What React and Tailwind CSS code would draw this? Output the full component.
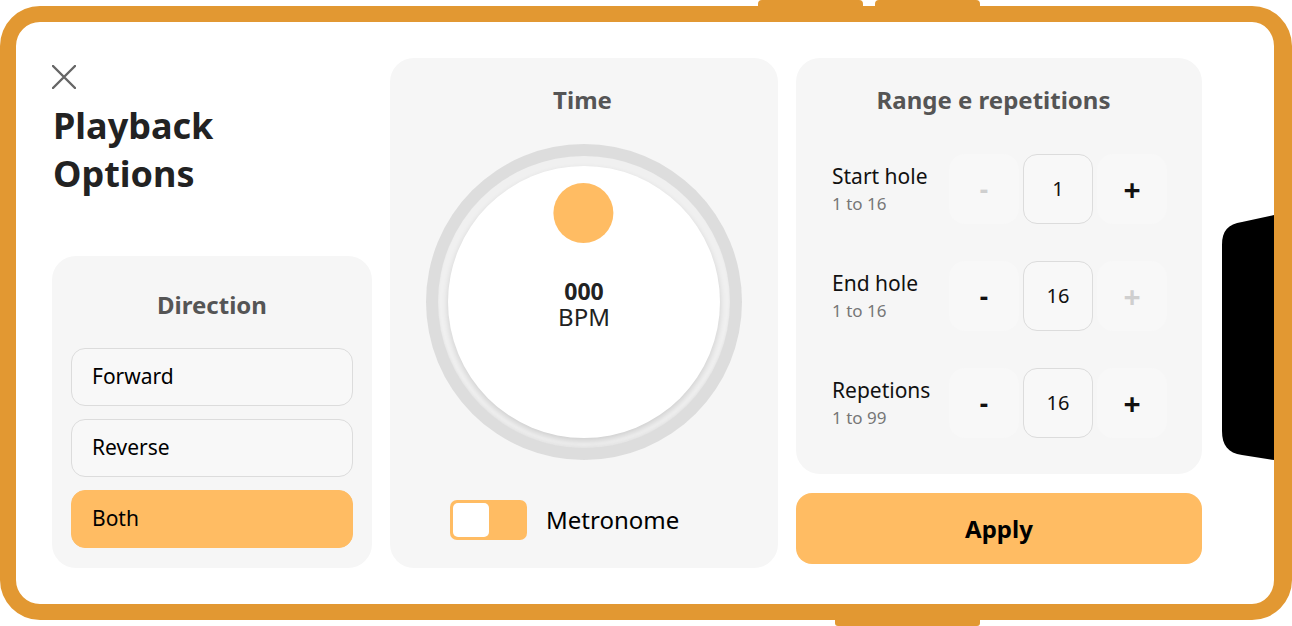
import { useState } from "react";

const font = { fontFamily: '"Noto Sans", "Open Sans", sans-serif' };

function CloseIcon() {
  return (
    <svg width="24" height="24" viewBox="0 0 24 24" className="block">
      <path d="M1 1L23 23M23 1L1 23" stroke="#666666" strokeWidth="2.4" strokeLinecap="round" />
    </svg>
  );
}

function Stepper({ label, range, value, minusOff, plusOff }) {
  return (
    <div className="flex items-center h-[70px]">
      <div className="flex-1">
        <div className="text-[21px] leading-[26px] text-[#111]">{label}</div>
        <div className="text-[17px] leading-[22px] mt-[4px] text-[#777]">{range}</div>
      </div>
      <div className="flex gap-[4px]">
        <button
          className={
            "w-[70px] h-[70px] rounded-[16px] bg-[#f8f8f8] text-[26px] font-bold " +
            (minusOff ? "text-[#cfcfcf]" : "text-[#111]")
          }
        >
          -
        </button>
        <div className="w-[70px] h-[70px] rounded-[14px] border-[1.5px] border-[#dcdcdc] bg-[#f8f8f8] flex items-center justify-center text-[20px] text-[#111]">
          {value}
        </div>
        <button
          className={
            "w-[70px] h-[70px] rounded-[16px] bg-[#f8f8f8] text-[30px] font-bold " +
            (plusOff ? "text-[#cfcfcf]" : "text-[#111]")
          }
        >
          +
        </button>
      </div>
    </div>
  );
}

export default function App() {
  const [direction, setDirection] = useState("Both");
  const [metronome, setMetronome] = useState(true);

  return (
    <div className="relative w-[1292px] h-[626px] bg-white overflow-hidden" style={font}>
      {/* top buttons of the device */}
      <div className="flex h-[6px]">
        <div className="ml-[758px] w-[105px] h-[8px] rounded-t-[4px] bg-[#E29832]" />
        <div className="ml-[12px] w-[105px] h-[8px] rounded-t-[4px] bg-[#E29832]" />
      </div>

      <div className="w-[1292px] h-[614px] border-[16px] border-r-[18px] border-[#E29832] rounded-[40px] bg-white">
        <div className="flex gap-[18px] p-[36px] h-full">
          {/* left column */}
          <div className="w-[320px] flex flex-col">
            <button className="mt-[7px] w-[24px] h-[24px]">
              <CloseIcon />
            </button>
            <h1 className="mt-[13px] ml-[1px] text-[36px] leading-[48px] font-bold text-[#222]">
              Playback
              <br />
              Options
            </h1>
            <div className="mt-auto h-[312px] rounded-[24px] bg-[#f6f6f6] px-[19px] pt-[33px]">
              <div className="text-center text-[24px] leading-[32px] font-bold text-[#555]">Direction</div>
              <div className="mt-[27px] flex flex-col gap-[13px]">
                {["Forward", "Reverse", "Both"].map((d) => (
                  <button
                    key={d}
                    onClick={() => setDirection(d)}
                    className={
                      "h-[58px] rounded-[14px] pl-[20px] text-left text-[21px] text-black " +
                      (direction === d
                        ? "bg-[#FFBC63] border-[1.5px] border-[#FFBC63]"
                        : "bg-[#f8f8f8] border-[1.5px] border-[#dcdcdc]")
                    }
                  >
                    {d}
                  </button>
                ))}
              </div>
            </div>
          </div>

          {/* time column */}
          <div className="w-[388px] rounded-[24px] bg-[#f6f6f6] pt-[26px] flex flex-col items-center">
            <div className="text-[24px] leading-[32px] font-bold text-[#555] -ml-[3px]">Time</div>
            <div className="mt-[28px] w-[316px] h-[316px] rounded-full bg-[#dddddd] p-[12px]">
              <div className="w-full h-full rounded-full bg-[#f0f0f0] p-[10px] shadow-[inset_0_-2px_3px_rgba(0,0,0,0.05)]">
                <div className="relative w-full h-full rounded-full bg-white shadow-[0_3px_6px_rgba(0,0,0,0.14)] flex flex-col items-center justify-center pt-[4px]">
                  <div className="absolute top-[17px] left-1/2 -translate-x-[51%] w-[60px] h-[60px] rounded-full bg-[#FFBC63]" />
                  <div className="text-[23px] leading-[26px] font-bold text-[#222]">000</div>
                  <div className="text-[24px] leading-[26px] text-[#222]">BPM</div>
                </div>
              </div>
            </div>
            <div className="mt-[40px] self-start ml-[60px] flex items-center gap-[19px]">
              <button
                onClick={() => setMetronome(!metronome)}
                className={
                  "w-[77px] h-[40px] rounded-[7px] p-[3px] flex " +
                  (metronome ? "bg-[#FFBC63] justify-start" : "bg-[#dddddd] justify-end")
                }
              >
                <span className="w-[36px] h-[34px] rounded-[5px] bg-white" />
              </button>
              <span className="text-[24px] text-black">Metronome</span>
            </div>
          </div>

          {/* range column */}
          <div className="w-[406px] flex flex-col">
            <div className="h-[416px] rounded-[24px] bg-[#f6f6f6] pt-[26px] pl-[36px] pr-[35px]">
              <div className="text-center text-[24px] leading-[32px] font-bold text-[#555] -ml-[6px] mr-[6px]">
                Range e repetitions
              </div>
              <div className="mt-[38px] flex flex-col gap-[37px]">
                <Stepper label="Start hole" range="1 to 16" value="1" minusOff />
                <Stepper label="End hole" range="1 to 16" value="16" plusOff />
                <Stepper label="Repetions" range="1 to 99" value="16" />
              </div>
            </div>
            <button className="mt-[19px] h-[71px] rounded-[16px] bg-[#FFBC63] text-[24px] font-bold text-black">
              Apply
            </button>
          </div>
        </div>
      </div>

      {/* bottom button of the device */}
      <div className="flex">
        <div className="ml-[835px] -mt-[1px] w-[145px] h-[7px] rounded-b-[3px] bg-[#E29832]" />
      </div>

      {/* camera notch on the right edge */}
      <svg className="absolute left-[1222px] top-[213px]" width="52" height="250" viewBox="0 0 52 250">
        <path d="M52 2 L20 9 C6 11 0 18 0 32 L0 218 C0 232 6 240 20 242 L52 247 Z" fill="#000" />
      </svg>
    </div>
  );
}
